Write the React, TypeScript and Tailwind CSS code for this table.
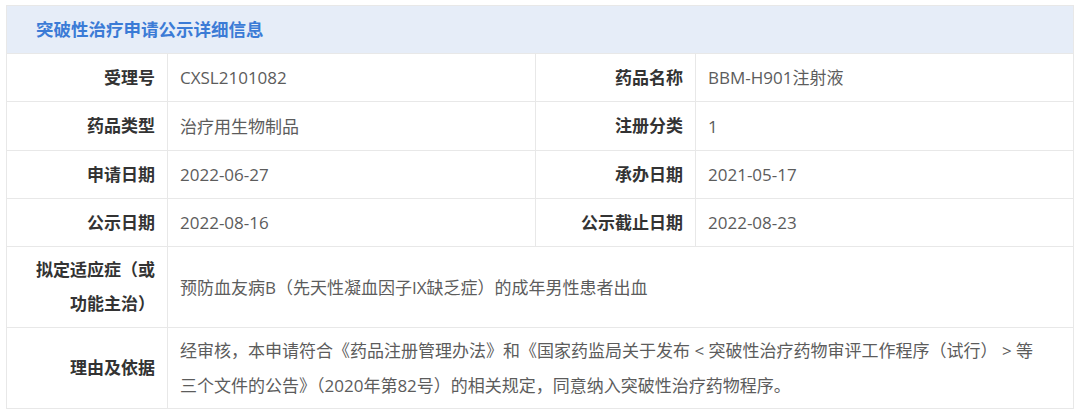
import React from "react";

const font = { fontFamily: '"Open Sans", "Noto Sans CJK SC", sans-serif' };

type Pair = { label: string; value: string };

const rows: { left: Pair; right: Pair; h: string }[] = [
  { left: { label: "受理号", value: "CXSL2101082" }, right: { label: "药品名称", value: "BBM-H901注射液" }, h: "h-[48px]" },
  { left: { label: "药品类型", value: "治疗用生物制品" }, right: { label: "注册分类", value: "1" }, h: "h-[49px]" },
  { left: { label: "申请日期", value: "2022-06-27" }, right: { label: "承办日期", value: "2021-05-17" }, h: "h-[48px]" },
  { left: { label: "公示日期", value: "2022-08-16" }, right: { label: "公示截止日期", value: "2022-08-23" }, h: "h-[48px]" },
];

const Label = ({ children, first }: { children: React.ReactNode; first?: boolean }) => (
  <div
    className={
      "flex items-center justify-end text-right pl-[28px] pr-3 font-bold text-[#333333] leading-[34px] " +
      (first ? "" : "border-l border-[#e8e8e8]")
    }
  >
    {children}
  </div>
);

const Value = ({ children }: { children: React.ReactNode }) => (
  <div className="flex items-center border-l border-[#e8e8e8] pl-3 pr-3 text-[#5c5c5c] leading-[35px]">
    {children}
  </div>
);

export default function App() {
  return (
    <div className="bg-white w-[1080px] h-[413px] pt-[5px] pl-[6px]" style={font}>
      <div className="w-[1068px] border border-[#e8e8e8] text-[17px]">
        <div className="h-[47px] bg-[#e6edf8] flex items-center pl-[29px] text-[17.5px] font-bold text-[#3b7bd6]">
          突破性治疗申请公示详细信息
        </div>

        {rows.map((r) => (
          <div key={r.left.label} className={"grid grid-cols-[160px_368px_160px_1fr] border-t border-[#e8e8e8] " + r.h}>
            <Label first>{r.left.label}</Label>
            <Value>{r.left.value}</Value>
            <Label>{r.right.label}</Label>
            <Value>{r.right.value}</Value>
          </div>
        ))}

        <div className="grid grid-cols-[160px_1fr] border-t border-[#e8e8e8] h-[81px]">
          <Label first>拟定适应症（或功能主治）</Label>
          <Value>预防血友病B（先天性凝血因子IX缺乏症）的成年男性患者出血</Value>
        </div>

        <div className="grid grid-cols-[160px_1fr] border-t border-[#e8e8e8] h-[81px]">
          <Label first>理由及依据</Label>
          <Value>
            <span>
              经审核，本申请符合《药品注册管理办法》和《国家药监局关于发布 &lt; 突破性治疗药物审评工作程序（试行） &gt; 等
              <br />
              三个文件的公告》（2020年第82号）的相关规定，同意纳入突破性治疗药物程序。
            </span>
          </Value>
        </div>
      </div>
    </div>
  );
}
